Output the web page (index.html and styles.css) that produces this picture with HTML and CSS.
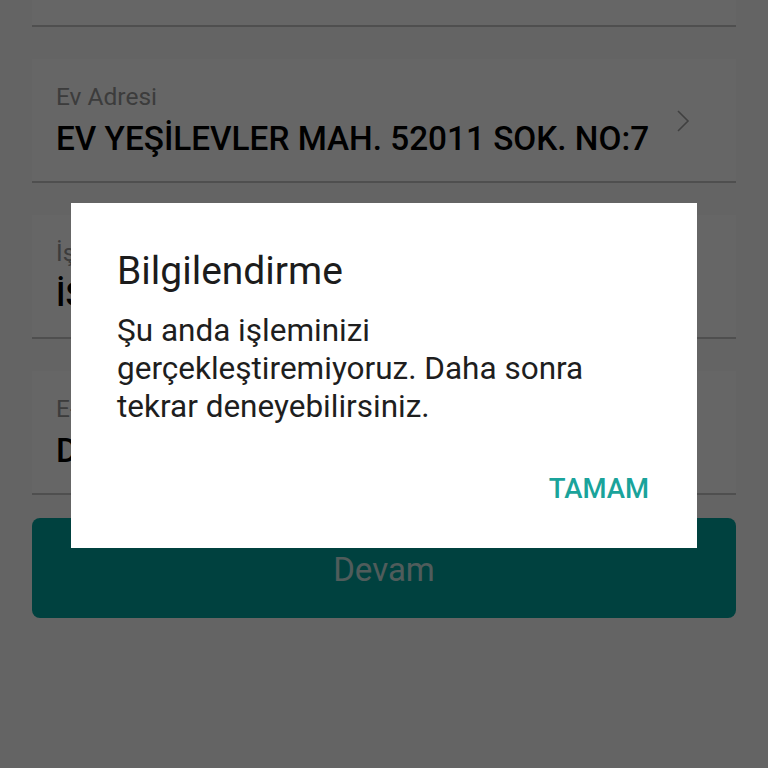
FILE: index.html
```html
<!DOCTYPE html>
<html>
<head>
    <title>Adres Bilgileri</title>
    <link rel="stylesheet" href="styles.css">
</head>
<body>
    <div class="page">
        <!-- Address fields -->
        <div class="field field-top">
            <span class="field-value">Ayşe Yılmaz</span>
        </div>

        <div class="field">
            <div class="field-text">
                <span class="field-label">Ev Adresi</span>
                <span class="field-value">EV YEŞİLEVLER MAH. 52011 SOK. NO:7</span>
            </div>
            <svg class="chevron" width="14" height="24" viewBox="0 0 14 24">
                <path d="M2 2 L12 12 L2 22" fill="none" stroke="#a0a0a0" stroke-width="1.6"/>
            </svg>
        </div>

        <div class="field">
            <div class="field-text">
                <span class="field-label">İş Adresi</span>
                <span class="field-value">İŞ YEŞİLEVLER MAH. 52011 SOK. NO:7</span>
            </div>
        </div>

        <div class="field">
            <div class="field-text">
                <span class="field-label">E-posta Adresi</span>
                <span class="field-value">DENEME@ORNEK.COM</span>
            </div>
        </div>

        <button class="primary-button">Devam</button>
    </div>

    <!-- Dialog over a dimmed page -->
    <div class="overlay">
        <div class="dialog">
            <h2 class="dialog-title">Bilgilendirme</h2>
            <p class="dialog-text">Şu anda işleminizi gerçekleştiremiyoruz. Daha sonra tekrar deneyebilirsiniz.</p>
            <div class="dialog-actions">
                <button class="text-button">TAMAM</button>
            </div>
        </div>
    </div>
</body>
</html>
```

FILE: styles.css
```css
body {
    font-family: Roboto, "Noto Sans", sans-serif;
    background-color: #fafafa;
    margin: 0;
    height: 768px;
    overflow: hidden;
}

.page {
    display: flex;
    flex-direction: column;
    gap: 32px;
    padding: 0 32px;
    margin-top: -97px;
}

.field {
    display: flex;
    align-items: center;
    height: 122px;
    padding: 0 24px;
    background-color: #ffffff;
    border-bottom: 2px solid #c6c6c6;
}

.field-text {
    flex: 1;
    display: flex;
    flex-direction: column;
    gap: 9px;
}

.field-label {
    font-size: 24.5px;
    line-height: 29px;
    color: #969696;
}

.field-value {
    font-size: 33.3px;
    line-height: 38px;
    font-weight: 500;
    color: #000;
    white-space: nowrap;
}

.field-top {
    align-items: flex-end;
    height: 98px;
    padding-bottom: 24px;
}

.chevron {
    margin-right: 22px;
    margin-top: 2px;
}

.primary-button {
    height: 100px;
    margin-top: -9px;
    border: none;
    border-radius: 8px;
    background-color: #00a39e;
    color: #c8e6e4;
    font-family: inherit;
    font-size: 33px;
    padding-top: 4px;
}

.overlay {
    position: fixed;
    inset: 0;
    background-color: rgba(0, 0, 0, 0.6);
    display: flex;
    align-items: flex-start;
    justify-content: center;
    padding-top: 203px;
}

.dialog {
    width: 626px;
    height: 345px;
    box-sizing: border-box;
    background-color: #fff;
    padding: 45px 48px 0 46px;
}

.dialog-title {
    margin: 0;
    font-size: 39px;
    font-weight: 400;
    line-height: 46px;
    color: #1c1c1c;
}

.dialog-text {
    margin: 18px 0 0 0;
    font-size: 31.5px;
    line-height: 38px;
    color: #1e1e1e;
    max-width: 490px;
}

.dialog-actions {
    display: flex;
    justify-content: flex-end;
    margin-top: 47px;
}

.text-button {
    border: none;
    background: none;
    padding: 0;
    font-family: inherit;
    font-size: 27.5px;
    line-height: 32px;
    font-weight: 500;
    color: #1aa39b;
}
```
